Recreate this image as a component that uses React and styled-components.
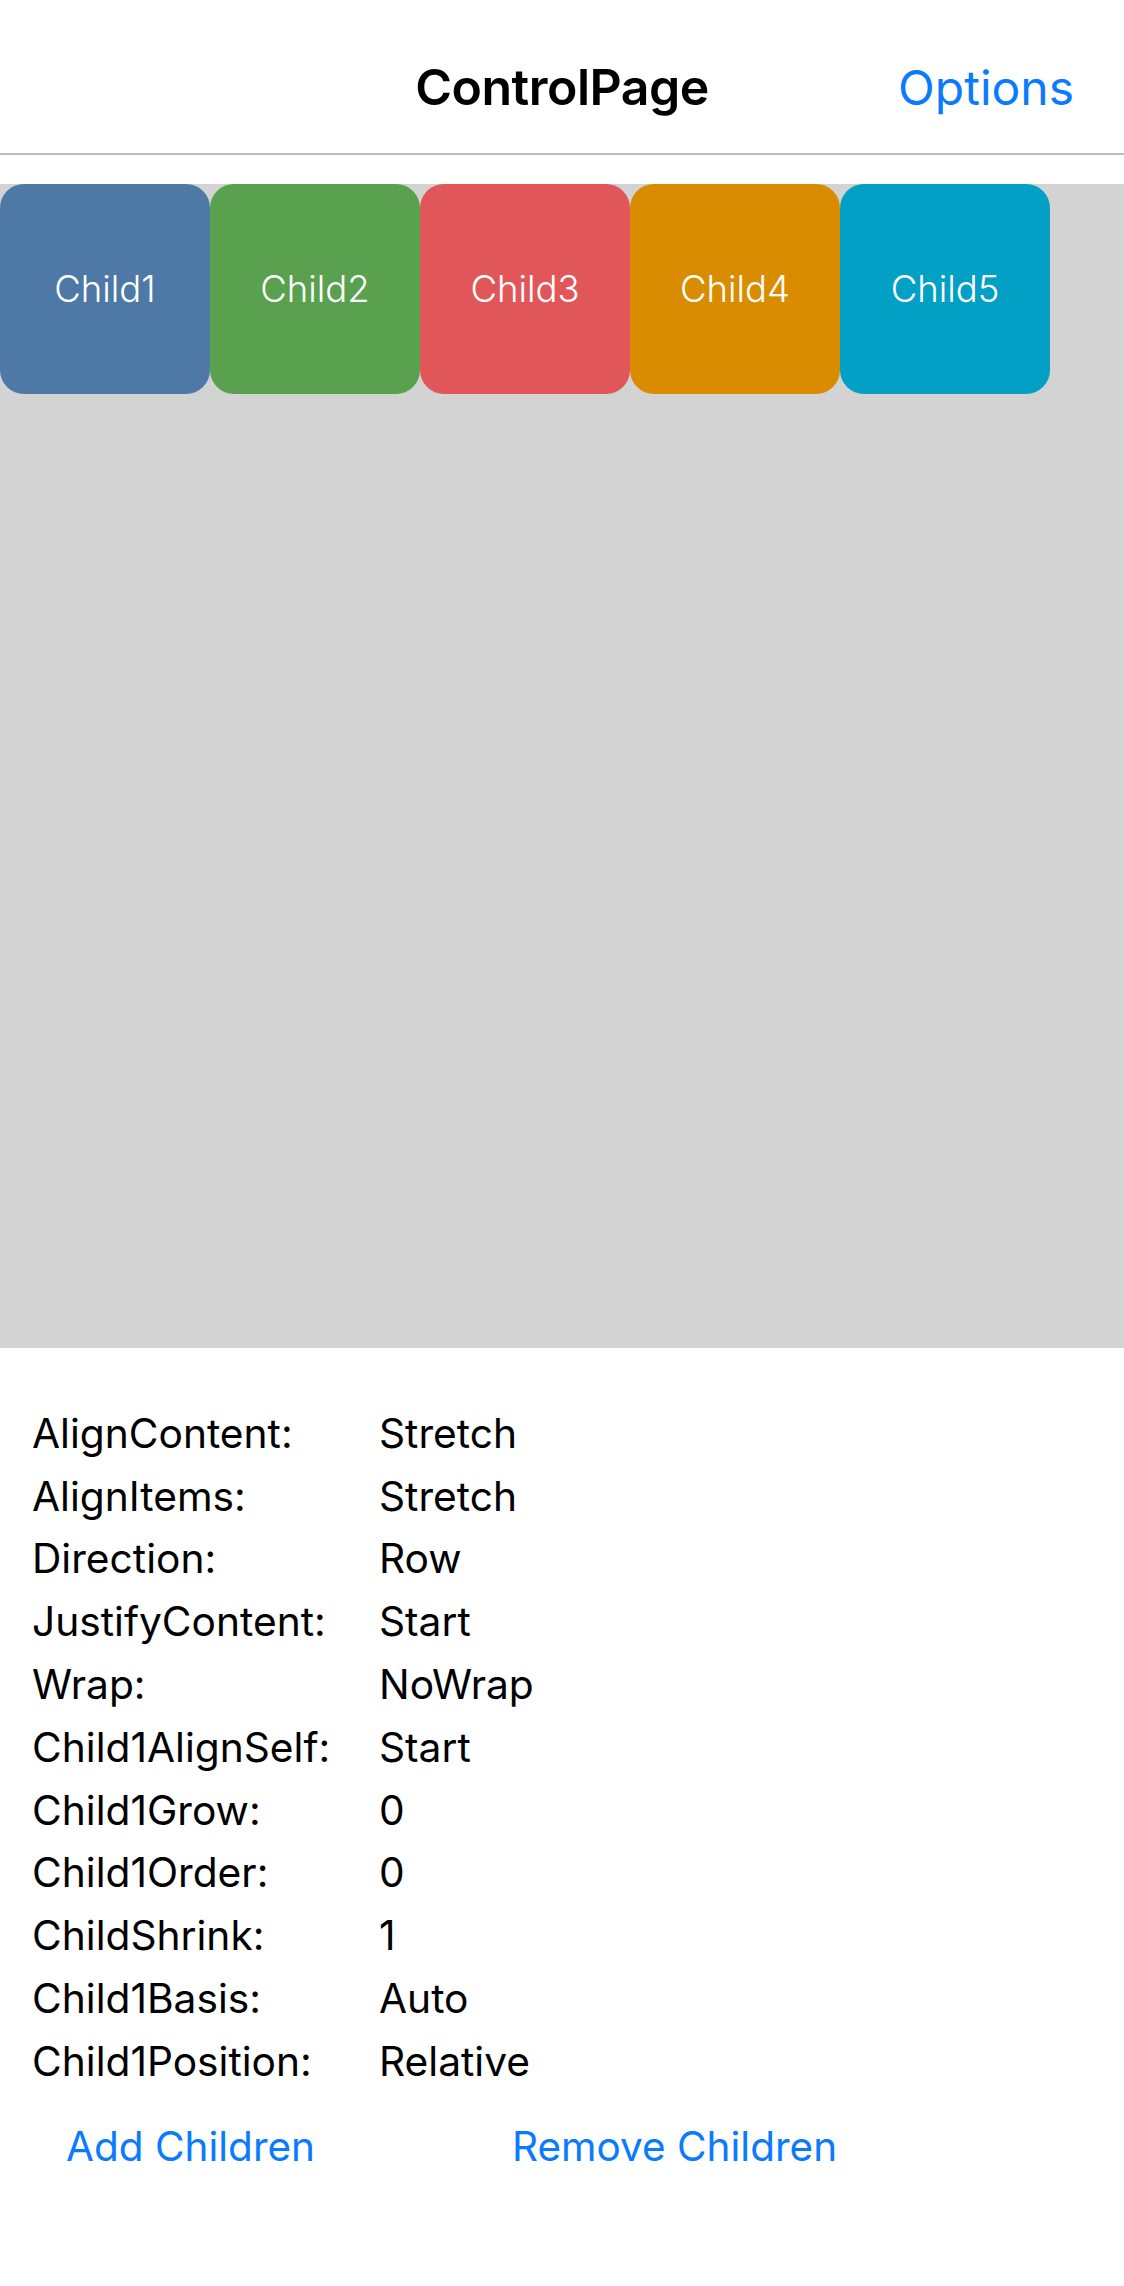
import React from "react";
import styled, { createGlobalStyle } from "styled-components";

const children = [
  { name: "Child1", color: "#4E79A7" },
  { name: "Child2", color: "#59A14F" },
  { name: "Child3", color: "#E15759" },
  { name: "Child4", color: "#DA8C00" },
  { name: "Child5", color: "#02A0C4" },
];

const settings = [
  ["AlignContent:", "Stretch"],
  ["AlignItems:", "Stretch"],
  ["Direction:", "Row"],
  ["JustifyContent:", "Start"],
  ["Wrap:", "NoWrap"],
  ["Child1AlignSelf:", "Start"],
  ["Child1Grow:", "0"],
  ["Child1Order:", "0"],
  ["ChildShrink:", "1"],
  ["Child1Basis:", "Auto"],
  ["Child1Position:", "Relative"],
];

function App() {
  return (
    <>
      <GlobalStyle />
      <Page>
        <NavBar>
          <Title>ControlPage</Title>
          <NavButton>Options</NavButton>
        </NavBar>

        <Playground>
          {children.map((c) => (
            <ChildBox key={c.name} $color={c.color}>
              {c.name}
            </ChildBox>
          ))}
        </Playground>

        <SettingsList>
          {settings.map(([label, value]) => (
            <SettingRow key={label}>
              <SettingLabel>{label}</SettingLabel>
              <SettingValue>{value}</SettingValue>
            </SettingRow>
          ))}
        </SettingsList>

        <ActionRow>
          <LinkButton>Add Children</LinkButton>
          <LinkButton>Remove Children</LinkButton>
        </ActionRow>
      </Page>
    </>
  );
}

export default App;

const GlobalStyle = createGlobalStyle`
  html, body {
    margin: 0;
    padding: 0;
    background: #fff;
  }
  body {
    font-family: Inter, "Noto Sans", sans-serif;
    color: #000;
  }
`;

const Page = styled.div`
  width: 1124px;
  min-height: 2286px;
  display: flex;
  flex-direction: column;
`;

const NavBar = styled.header`
  position: relative;
  height: 153px;
  border-bottom: 2px solid #bcbcbc;
  display: flex;
  align-items: center;
  justify-content: center;
  margin-bottom: 29px;
`;

const Title = styled.h1`
  margin: 0;
  padding-top: 20px;
  font-size: 50px;
  font-weight: 600;
  letter-spacing: -0.5px;
`;

const NavButton = styled.span`
  position: absolute;
  right: 50px;
  top: 58px;
  font-size: 48px;
  color: #0A7AFF;
  cursor: pointer;
`;

const Playground = styled.div`
  height: 1164px;
  background-color: #d3d3d3;
  display: flex;
  align-items: flex-start;
`;

const ChildBox = styled.div`
  width: 210px;
  height: 210px;
  flex-shrink: 0;
  border-radius: 24px;
  background-color: ${({ $color }) => $color};
  color: #fff;
  font-size: 36.5px;
  font-weight: 300;
  display: flex;
  align-items: center;
  justify-content: center;
`;

const SettingsList = styled.div`
  display: flex;
  flex-direction: column;
  padding: 54px 0 0 32px;
`;

const SettingRow = styled.div`
  display: flex;
  height: 62.8px;
  align-items: center;
  font-size: 40.7px;
`;

const SettingLabel = styled.span`
  width: 347px;
`;

const SettingValue = styled.span``;

const ActionRow = styled.div`
  display: flex;
  gap: 197px;
  padding: 29px 0 0 66px;
`;

const LinkButton = styled.span`
  font-size: 40.5px;
  color: #0A7AFF;
  cursor: pointer;
`;
